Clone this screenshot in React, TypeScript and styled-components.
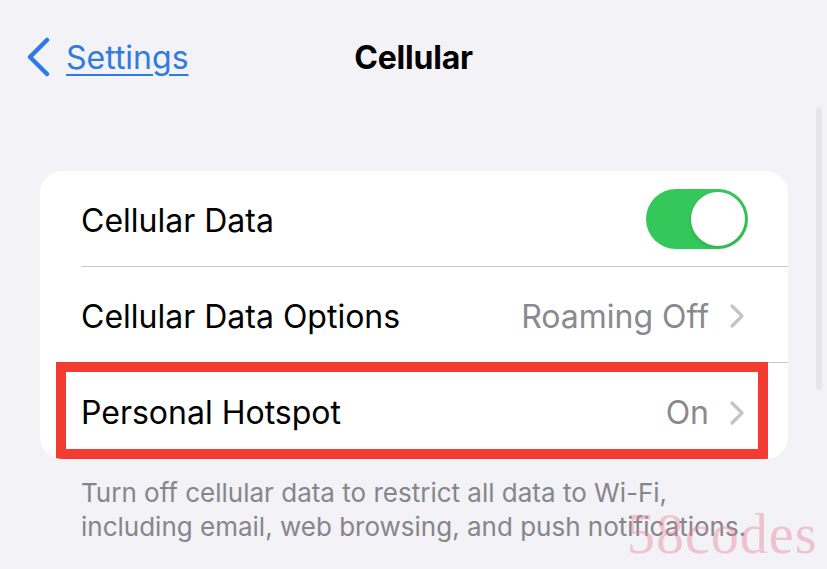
import styled, { createGlobalStyle } from 'styled-components';

const GlobalStyle = createGlobalStyle`
  body {
    margin: 0;
    background: #f2f2f7;
    font-family: Inter, "Noto Sans", sans-serif;
  }
`;

const Page = styled.div`
  position: relative;
  width: 827px;
  height: 569px;
  overflow: hidden;
  background: #f2f2f7;
`;

const NavBar = styled.div`
  position: relative;
  height: 114px;
  display: flex;
  align-items: center;
  justify-content: center;
`;

const BackButton = styled.a`
  position: absolute;
  left: 26px;
  top: 37px;
  display: flex;
  align-items: center;
  gap: 16px;
  color: #2f7be0;
  font-size: 32px;
  text-decoration: underline;
  text-decoration-thickness: 2px;
  text-underline-offset: 5px;
  cursor: pointer;
`;

const Title = styled.h1`
  margin: 0;
  font-size: 32px;
  font-weight: 700;
  color: #000;
  letter-spacing: -0.2px;
`;

const Content = styled.div`
  padding: 57px 39px 0 40px;
`;

const Card = styled.div`
  background: #fff;
  border-radius: 22px;
  overflow: hidden;
`;

const Row = styled.div`
  position: relative;
  padding-left: 41px;
`;

const RowInner = styled.div<{ $last?: boolean }>`
  height: 96px;
  display: flex;
  align-items: center;
  justify-content: space-between;
  padding: 3px 40px 0 0;
  border-bottom: ${(p) => (p.$last ? 'none' : '1px solid #c8c8cc')};
  box-sizing: border-box;
`;

const Label = styled.span`
  font-size: 32px;
  color: #000;
`;

const Detail = styled.span`
  display: flex;
  align-items: center;
  gap: 20px;
  font-size: 32px;
  color: #8a8a8e;
  padding-right: 3px;
`;

const Toggle = styled.div<{ $on: boolean }>`
  position: relative;
  width: 102px;
  height: 60px;
  margin-top: -3px;
  border-radius: 30px;
  background: ${(p) => (p.$on ? '#34c759' : '#e9e9ea')};
`;

const Knob = styled.div<{ $on: boolean }>`
  position: absolute;
  top: 3px;
  ${(p) => (p.$on ? 'right: 3px;' : 'left: 3px;')}
  width: 54px;
  height: 54px;
  border-radius: 50%;
  background: #fff;
  box-shadow: 0 2px 4px rgba(0, 0, 0, 0.12);
`;

const Highlight = styled.div`
  position: absolute;
  left: 16px;
  top: -1px;
  right: 20px;
  bottom: 0;
  border: 10px solid #f23b31;
  pointer-events: none;
`;

const Footer = styled.p`
  margin: 17px 0 0 0;
  padding-left: 41px;
  font-size: 26px;
  line-height: 34px;
  color: #86868b;
`;

const Watermark = styled.div`
  position: absolute;
  left: 627px;
  top: 502px;
  font-family: "Liberation Serif", serif;
  font-size: 56px;
  font-weight: 300;
  letter-spacing: 1px;
  color: rgba(236, 130, 150, 0.42);
  pointer-events: none;
`;

const ScrollBar = styled.div`
  position: absolute;
  right: 5px;
  top: 107px;
  width: 6px;
  height: 283px;
  border-radius: 3px;
  background: #e6e6eb;
`;

const Chevron = () => (
  <svg width="16" height="26" viewBox="0 0 16 26">
    <path d="M3 3 L13 13 L3 23" fill="none" stroke="#c4c4c7" strokeWidth="3.2" strokeLinecap="round" strokeLinejoin="round" />
  </svg>
);

const BackChevron = () => (
  <svg width="24" height="40" viewBox="0 0 24 40">
    <path d="M21 3 L4 20 L21 37" fill="none" stroke="#2f7be0" strokeWidth="4.5" strokeLinecap="round" strokeLinejoin="round" />
  </svg>
);

export default function App() {
  return (
    <Page>
      <GlobalStyle />
      <NavBar>
        <BackButton>
          <BackChevron />
          Settings
        </BackButton>
        <Title>Cellular</Title>
      </NavBar>
      <Content>
        <Card>
          <Row>
            <RowInner>
              <Label>Cellular Data</Label>
              <Toggle $on>
                <Knob $on />
              </Toggle>
            </RowInner>
          </Row>
          <Row>
            <RowInner>
              <Label>Cellular Data Options</Label>
              <Detail>
                Roaming Off
                <Chevron />
              </Detail>
            </RowInner>
          </Row>
          <Row>
            <RowInner $last>
              <Label>Personal Hotspot</Label>
              <Detail>
                On
                <Chevron />
              </Detail>
            </RowInner>
            <Highlight />
          </Row>
        </Card>
        <Footer>
          Turn off cellular data to restrict all data to Wi-Fi,
          <br />
          including email, web browsing, and push notifications.
        </Footer>
      </Content>
      <Watermark>58codes</Watermark>
      <ScrollBar />
    </Page>
  );
}
